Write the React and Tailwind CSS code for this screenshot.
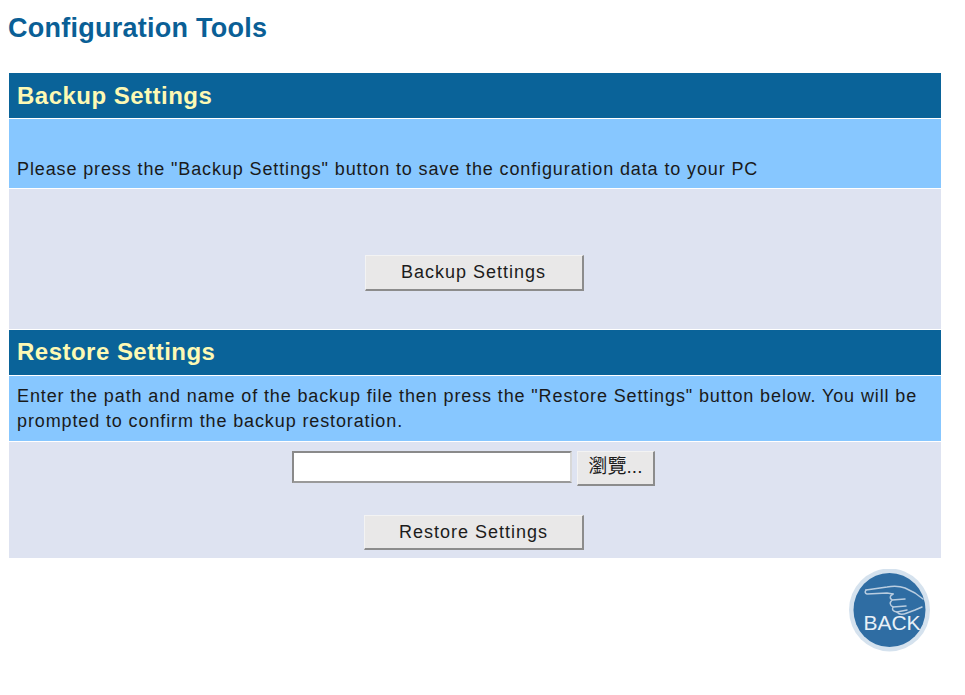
const sans = "font-['Liberation_Sans',Arial,sans-serif]";

function Header({ children, className = "" }) {
  return (
    <div className={"h-[46px] shrink-0 bg-[#0a6399] pl-2 flex items-center text-[24px] tracking-[0.02em] font-bold text-[#fdf9b4] border-b border-white " + className}>
      {children}
    </div>
  );
}

function Btn({ children, className }) {
  return (
    <div className={"flex items-center justify-center shrink-0 bg-[#e9e8e8] border-t border-l border-t-[#f3f3f3] border-l-[#f3f3f3] border-r-2 border-b-2 border-r-[#8c8c8c] border-b-[#8c8c8c] text-[#1c1c1c] " + className}>
      {children}
    </div>
  );
}

function BackIcon() {
  return (
    <svg width="82" height="84" viewBox="0 0 82 84" className="block">
      <ellipse cx="40.5" cy="41" rx="40.5" ry="41.5" fill="#d5e2ee" />
      <ellipse cx="40.5" cy="41" rx="36" ry="37" fill="#2f6da3" />
      <g fill="none" stroke="#b9cde0" strokeWidth="1.5" strokeLinejoin="round" strokeLinecap="round">
        <path d="M17 21 L38 18 Q48 16 56 19 L66 24 L74 30" />
        <path d="M17 21 Q15 24 18 25 L38 24 L44 25" />
        <path d="M44 25 Q39 28 43 31 Q39 35 44 38 Q42 42 48 43 Q51 47 58 44 L66 41 L73 38" />
        <path d="M43 31 L56 30 M44 38 L57 37 M48 43 L58 41" />
      </g>
      <text x="43" y="61" textAnchor="middle" fill="#e8f0f7" fontSize="21" fontFamily="'Liberation Sans',Arial,sans-serif">BACK</text>
    </svg>
  );
}

export default function App() {
  return (
    <div className={"w-[965px] h-[695px] bg-white overflow-hidden flex flex-col pl-[9px] pr-[24px] " + sans}>
      <h1 className="h-[73px] shrink-0 pt-[10px] -ml-[1px] text-[27px] tracking-[0.25px] leading-[36px] font-bold text-[#0a5f96]">Configuration Tools</h1>

      <Header>Backup Settings</Header>
      <div className="h-[70px] shrink-0 bg-[#87c7ff] border-b border-white pl-2 pb-[6px] flex items-end text-[18px] leading-[25px] tracking-[0.88px] text-[#1a1a1a]">
        Please press the "Backup Settings" button to save the configuration data to your PC
      </div>
      <div className="h-[141px] shrink-0 bg-[#dee3f1] border-b border-white flex justify-center pt-[66px]">
        <Btn className="w-[219px] h-[36px] ml-[-2px] text-[18px] tracking-[1px]">Backup Settings</Btn>
      </div>

      <Header className="pb-[2px]">Restore Settings</Header>
      <div className="h-[66px] shrink-0 bg-[#87c7ff] border-b border-white pl-2 pr-2 pt-[8px] text-[18px] leading-[25px] tracking-[0.88px] text-[#1a1a1a]">
        Enter the path and name of the backup file then press the "Restore Settings" button below. You will be prompted to confirm the backup restoration.
      </div>
      <div className="h-[116px] shrink-0 bg-[#dee3f1] flex flex-col items-center pt-[9px]">
        <div className="flex items-start gap-[5px] ml-[-3px]">
          <div className="w-[280px] h-[32px] bg-white border-2 border-t-[#8a8a8a] border-l-[#8a8a8a] border-r-[#d8d8d8] border-b-[#9a9a9a]" />
          <Btn className="w-[78px] h-[35px] text-[19px] pb-[2px] font-['Liberation_Sans','Noto_Sans_CJK_TC',sans-serif]">瀏覽...</Btn>
        </div>
        <Btn className="w-[220px] h-[35px] mt-[29px] ml-[-2px] text-[18px] tracking-[1px]">Restore Settings</Btn>
      </div>

      <div className="flex justify-end pt-[11px] pr-[10px]">
        <BackIcon />
      </div>
    </div>
  );
}
